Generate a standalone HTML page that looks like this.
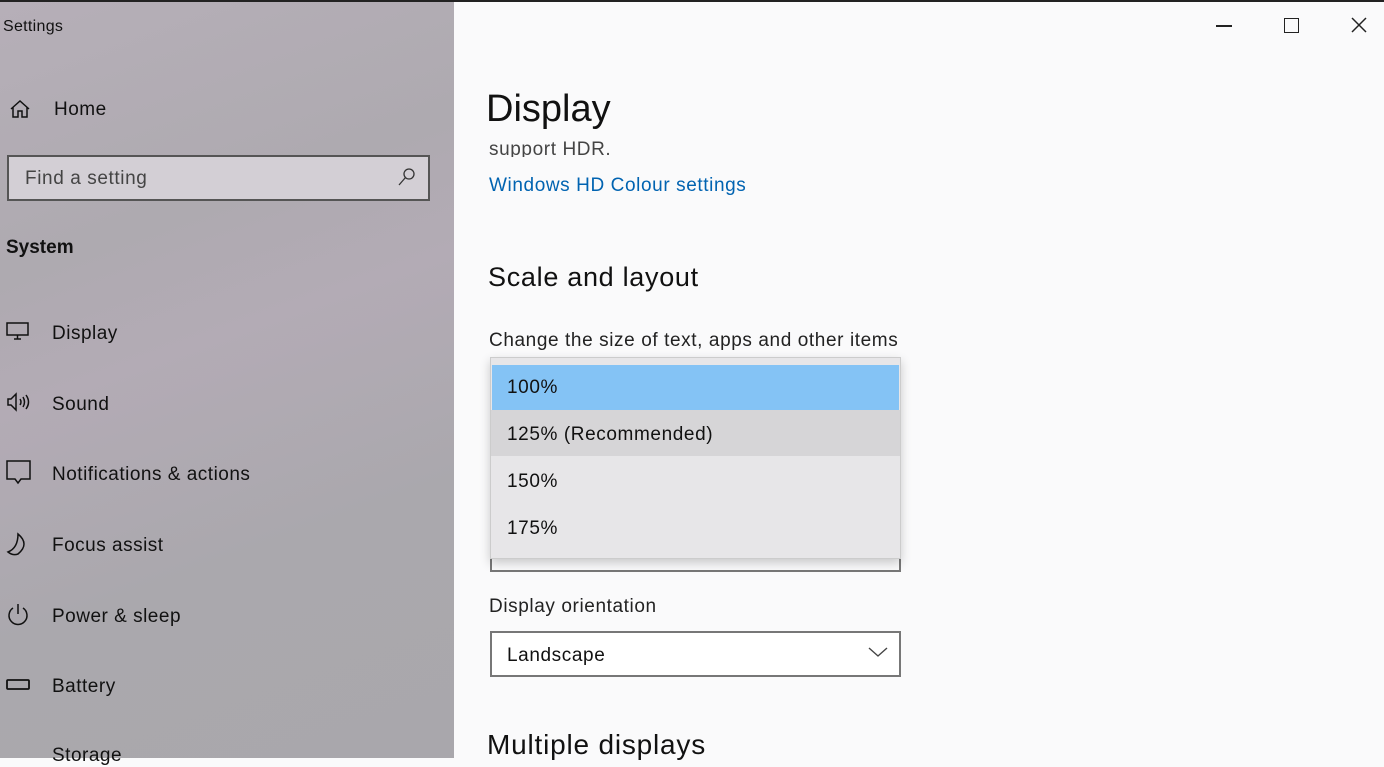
<!DOCTYPE html><html><head><style>
body{margin:0;width:1384px;height:758px;overflow:hidden;position:relative;font-family:"Liberation Sans",sans-serif;background:#fafafb;color:#111}
.a{position:absolute;white-space:nowrap}
#side{position:absolute;left:0;top:0;width:454px;height:758px;background:linear-gradient(160deg,#b6afb8 0%,#aeaab0 30%,#b3abb5 45%,#aaa8ad 70%,#a9a7ac 100%)}
.nav{font-size:19px;color:#111;letter-spacing:0.5px}
.t{letter-spacing:0.6px}
svg{position:absolute}
</style></head><body>
<div id="side"></div>
<div class="a" style="left:0;top:0;width:1384px;height:2px;background:#222"></div>
<div class="a" style="left:3px;top:18px;font-size:16px;letter-spacing:0.3px">Settings</div>
<svg style="left:9px;top:98px" width="22" height="22" viewBox="0 0 22 22" fill="none" stroke="#111" stroke-width="1.5"><path d="M2 11 L11 3 L20 11 M4 9 V19 H9 V13 H13 V19 H18 V9"/></svg>
<div class="a nav" style="left:54px;top:99px">Home</div>
<div class="a" style="left:7px;top:155px;width:419px;height:42px;border:2px solid #555;background:#d3cfd5"></div>
<div class="a t" style="left:25px;top:168px;font-size:19px;color:#444">Find a setting</div>
<svg style="left:397px;top:167px" width="20" height="20" viewBox="0 0 20 20" fill="none" stroke="#333" stroke-width="1.3"><circle cx="12" cy="7" r="5"/><path d="M8.5 10.5 L2 18"/></svg>
<div class="a" style="left:6px;top:237px;font-size:19px;font-weight:bold">System</div>
<svg style="left:6px;top:322px" width="24" height="20" viewBox="0 0 24 20" fill="none" stroke="#111" stroke-width="1.5"><rect x="1" y="1" width="21" height="12"/><path d="M11.5 13 V17 M8 17 H15"/></svg>
<div class="a nav" style="left:52px;top:323px">Display</div>
<svg style="left:6px;top:392px" width="26" height="22" viewBox="0 0 26 22" fill="none" stroke="#111" stroke-width="1.5"><path d="M2 7 H5 L10 2 V18 L5 13 H2 Z M14 7 Q16 10 14 13 M17 5 Q20 10 17 15 M20 3 Q25 10 20 17"/></svg>
<div class="a nav" style="left:52px;top:394px">Sound</div>
<svg style="left:6px;top:460px" width="26" height="26" viewBox="0 0 26 26" fill="none" stroke="#111" stroke-width="1.5"><path d="M1 1 H24 V19 H15 L12 23 L9 19 H1 Z"/></svg>
<div class="a nav" style="left:52px;top:464px">Notifications &amp; actions</div>
<svg style="left:6px;top:532px" width="24" height="26" viewBox="0 0 24 26" fill="none" stroke="#111" stroke-width="1.5"><path d="M12 2 Q24 12 12 22 Q7 24 2 20 Q12 16 12 2 Z"/></svg>
<div class="a nav" style="left:52px;top:535px">Focus assist</div>
<svg style="left:6px;top:603px" width="24" height="24" viewBox="0 0 24 24" fill="none" stroke="#111" stroke-width="1.5"><path d="M7 5 A9 9 0 1 0 17 5 M12 1 V11"/></svg>
<div class="a nav" style="left:52px;top:606px">Power &amp; sleep</div>
<svg style="left:6px;top:678px" width="26" height="16" viewBox="0 0 26 16" fill="none" stroke="#111" stroke-width="1.8"><rect x="1" y="2" width="22" height="9" rx="1"/></svg>
<div class="a nav" style="left:52px;top:676px">Battery</div>
<div class="a nav" style="left:52px;top:745px">Storage</div>
<!-- window controls -->
<div class="a" style="left:1216px;top:25px;width:16px;height:1.5px;background:#222"></div>
<div class="a" style="left:1284px;top:18px;width:13px;height:13px;border:1.5px solid #222"></div>
<svg style="left:1351px;top:17px" width="16" height="16" viewBox="0 0 16 16" stroke="#222" stroke-width="1.5"><path d="M1 1 L15 15 M15 1 L1 15"/></svg>
<!-- content -->
<div class="a" style="left:486px;top:88px;font-size:38px">Display</div>
<div class="a t" style="left:489px;top:139px;font-size:19px;color:#444;height:18px;overflow:hidden">support HDR.</div>
<div class="a t" style="left:489px;top:175px;font-size:19px;color:#0063b1">Windows HD Colour settings</div>
<div class="a" style="left:488px;top:262px;font-size:27px;letter-spacing:0.7px">Scale and layout</div>
<div class="a t" style="left:489px;top:330px;font-size:19px;color:#222">Change the size of text, apps and other items</div>
<div class="a" style="left:490px;top:540px;width:407px;height:30px;border:2px solid #777;border-top:none"></div>
<div class="a" style="left:490px;top:357px;width:409px;height:200px;background:#e7e6e8;border:1px solid #ccc;box-shadow:0 4px 10px rgba(0,0,0,.2)"></div>
<div class="a" style="left:492px;top:365px;width:407px;height:45px;background:#84c3f5"></div>
<div class="a" style="left:491px;top:410px;width:409px;height:46px;background:#d6d5d7"></div>
<div class="a t" style="left:507px;top:377px;font-size:19px">100%</div>
<div class="a t" style="left:507px;top:424px;font-size:19px">125% (Recommended)</div>
<div class="a t" style="left:507px;top:471px;font-size:19px">150%</div>
<div class="a t" style="left:507px;top:518px;font-size:19px">175%</div>
<div class="a t" style="left:489px;top:596px;font-size:19px;color:#222">Display orientation</div>
<div class="a" style="left:490px;top:631px;width:407px;height:42px;border:2px solid #777;background:#fff"></div>
<div class="a t" style="left:507px;top:645px;font-size:19px">Landscape</div>
<svg style="left:868px;top:646px" width="20" height="12" viewBox="0 0 20 12" fill="none" stroke="#444" stroke-width="1.4"><path d="M1 2 L10 10 L19 2"/></svg>
<div class="a" style="left:487px;top:729px;font-size:28px;letter-spacing:0.8px">Multiple displays</div>
</body></html>
